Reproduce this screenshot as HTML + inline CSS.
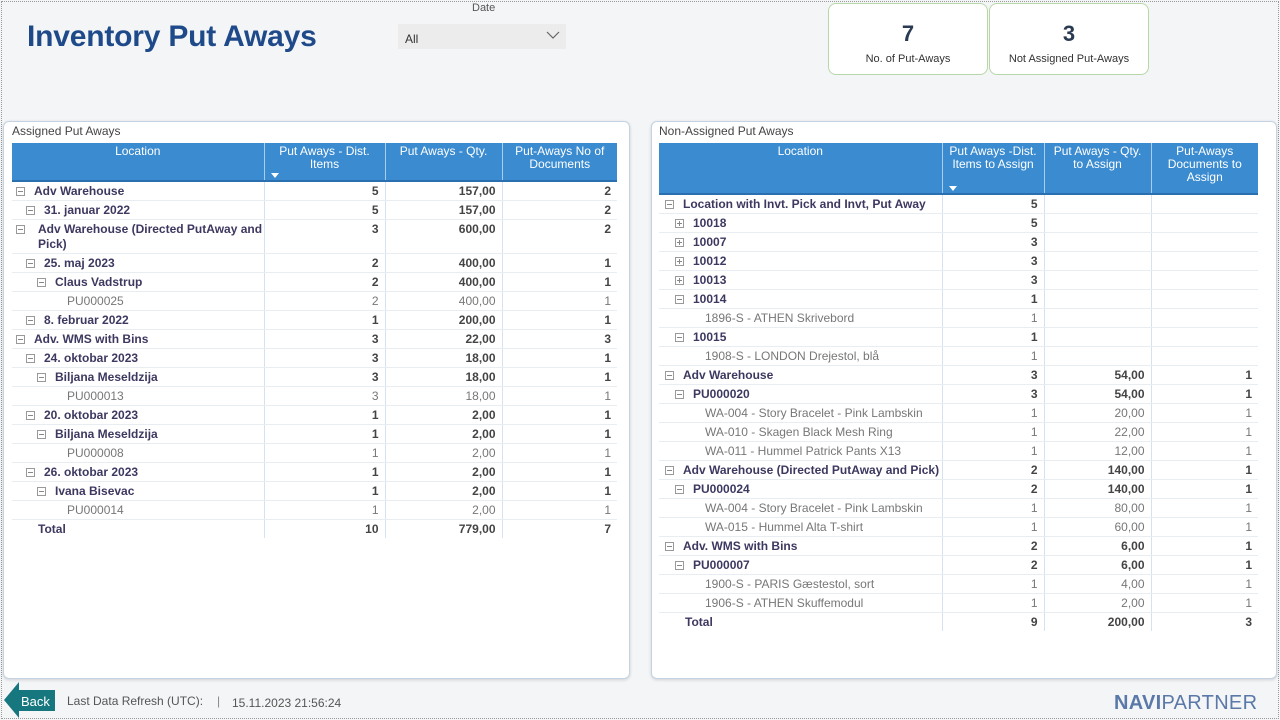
<!DOCTYPE html>
<html><head><meta charset="utf-8">
<style>
*{margin:0;padding:0;box-sizing:border-box}
body{width:1280px;height:720px;overflow:hidden;font-family:"Liberation Sans",sans-serif;background:#f4f5f7;position:relative}
.frame{position:absolute;left:1px;top:1px;width:1278px;height:718px;border:1px dotted #999}
.title{position:absolute;left:27px;top:20px;font-size:30px;font-weight:bold;color:#1f4a8a;letter-spacing:-0.2px}
.datel{position:absolute;left:472px;top:2px;font-size:11px;color:#555}
.dd{position:absolute;left:398px;top:24px;width:168px;height:25px;background:#ececec;font-size:12px;color:#333;padding:8px 0 0 7px}
.dd svg{position:absolute;right:6px;top:7px}
.card{position:absolute;top:3px;height:72px;width:160px;background:#fff;border:1px solid #b8d7a8;border-radius:8px;text-align:center}
.card b{display:block;font-size:22px;color:#2a3a52;margin-top:17px}
.card span{display:block;font-size:11px;color:#333;margin-top:6px}
.panel{position:absolute;top:121px;height:558px;background:#fff;border:1px solid #c4d3e3;border-radius:6px;box-shadow:0 1px 3px rgba(0,0,0,.15)}
.ptitle{position:absolute;top:3px;font-size:12px;color:#444}
table{position:absolute;border-collapse:collapse;table-layout:fixed;font-size:12px}
th{background:#3a8bd0;color:#fff;font-weight:normal;vertical-align:top;padding-top:2px;line-height:13px;border-left:1px solid #a9cdee;position:relative}
th:first-child{border-left:none}
th .ar{position:absolute;left:6px;bottom:2px;width:0;height:0;border-left:4px solid transparent;border-right:4px solid transparent;border-top:5px solid #fff}
thead tr{border-bottom:2px solid #2a6fb0}
td{height:19px;border-bottom:1px solid #e8edf2;text-align:right;padding-right:6px;vertical-align:top;padding-top:2px;color:#555;white-space:nowrap}
td+td{border-left:1px solid #d4e3f1}
td:first-child{text-align:left;padding-right:0;white-space:nowrap;overflow:hidden}
tr.b td{font-weight:bold;color:#3c3860}
tr.b td+td{color:#444}
tr.l td{color:#777}
.ic{display:inline-block;width:9px;height:9px;border:1px solid #999;position:relative;vertical-align:-1px;margin-right:9px}
.ic:before{content:"";position:absolute;left:1px;right:1px;top:3px;height:1px;background:#888}
.ic.p:after{content:"";position:absolute;top:1px;bottom:1px;left:3px;width:1px;background:#888}
.foot{position:absolute;top:694px;font-size:12px;color:#555}
</style></head><body>
<div class="frame"></div>
<div class="title">Inventory Put Aways</div>
<div class="datel">Date</div>
<div class="dd">All<svg width="14" height="9"><path d="M1 1 L7 7 L13 1" fill="none" stroke="#666" stroke-width="1.2"/></svg></div>
<div class="card" style="left:828px"><b>7</b><span>No. of Put-Aways</span></div>
<div class="card" style="left:989px"><b>3</b><span>Not Assigned Put-Aways</span></div>

<div class="panel" style="left:3px;width:627px"></div>
<div class="ptitle" style="left:12px;top:124px">Assigned Put Aways</div>
<table style="left:12px;top:143px;width:605px">
<colgroup><col style="width:252px"><col style="width:121px"><col style="width:117px"><col style="width:115px"></colgroup>
<thead><tr style="height:38px"><th>Location</th><th>Put Aways - Dist.<br>Items<span class="ar"></span></th><th>Put Aways - Qty.</th><th>Put-Aways No of<br>Documents</th></tr></thead>
<tbody>
<tr class="b"><td style="padding-left:4px"><span class="ic"></span>Adv Warehouse</td><td>5</td><td>157,00</td><td>2</td></tr>
<tr class="b"><td style="padding-left:14px"><span class="ic"></span>31. januar 2022</td><td>5</td><td>157,00</td><td>2</td></tr>
<tr class="b"><td style="padding-left:4px;white-space:normal;line-height:15px;height:34px;position:relative"><span class="ic" style="position:absolute;left:4px;top:5px"></span><div style="margin-left:22px">Adv Warehouse (Directed PutAway and Pick)</div></td><td>3</td><td>600,00</td><td>2</td></tr>
<tr class="b"><td style="padding-left:14px"><span class="ic"></span>25. maj 2023</td><td>2</td><td>400,00</td><td>1</td></tr>
<tr class="b"><td style="padding-left:25px"><span class="ic"></span>Claus Vadstrup</td><td>2</td><td>400,00</td><td>1</td></tr>
<tr class="l"><td style="padding-left:55px">PU000025</td><td>2</td><td>400,00</td><td>1</td></tr>
<tr class="b"><td style="padding-left:14px"><span class="ic"></span>8. februar 2022</td><td>1</td><td>200,00</td><td>1</td></tr>
<tr class="b"><td style="padding-left:4px"><span class="ic"></span>Adv. WMS with Bins</td><td>3</td><td>22,00</td><td>3</td></tr>
<tr class="b"><td style="padding-left:14px"><span class="ic"></span>24. oktobar 2023</td><td>3</td><td>18,00</td><td>1</td></tr>
<tr class="b"><td style="padding-left:25px"><span class="ic"></span>Biljana Meseldzija</td><td>3</td><td>18,00</td><td>1</td></tr>
<tr class="l"><td style="padding-left:55px">PU000013</td><td>3</td><td>18,00</td><td>1</td></tr>
<tr class="b"><td style="padding-left:14px"><span class="ic"></span>20. oktobar 2023</td><td>1</td><td>2,00</td><td>1</td></tr>
<tr class="b"><td style="padding-left:25px"><span class="ic"></span>Biljana Meseldzija</td><td>1</td><td>2,00</td><td>1</td></tr>
<tr class="l"><td style="padding-left:55px">PU000008</td><td>1</td><td>2,00</td><td>1</td></tr>
<tr class="b"><td style="padding-left:14px"><span class="ic"></span>26. oktobar 2023</td><td>1</td><td>2,00</td><td>1</td></tr>
<tr class="b"><td style="padding-left:25px"><span class="ic"></span>Ivana Bisevac</td><td>1</td><td>2,00</td><td>1</td></tr>
<tr class="l"><td style="padding-left:55px">PU000014</td><td>1</td><td>2,00</td><td>1</td></tr>
<tr class="b"><td style="padding-left:26px;border-bottom:none">Total</td><td style="border-bottom:none">10</td><td style="border-bottom:none">779,00</td><td style="border-bottom:none">7</td></tr>
</tbody></table>

<div class="panel" style="left:651px;width:626px"></div>
<div class="ptitle" style="left:659px;top:124px">Non-Assigned Put Aways</div>
<table style="left:659px;top:143px;width:599px">
<colgroup><col style="width:283px"><col style="width:102px"><col style="width:107px"><col style="width:107px"></colgroup>
<thead><tr style="height:51px"><th>Location</th><th>Put Aways -Dist.<br>Items to Assign<span class="ar"></span></th><th>Put Aways - Qty.<br>to Assign</th><th>Put-Aways<br>Documents to<br>Assign</th></tr></thead>
<tbody>
<tr class="b"><td style="padding-left:6px"><span class="ic"></span>Location with Invt. Pick and Invt, Put Away</td><td>5</td><td></td><td></td></tr>
<tr class="b"><td style="padding-left:16px"><span class="ic p"></span>10018</td><td>5</td><td></td><td></td></tr>
<tr class="b"><td style="padding-left:16px"><span class="ic p"></span>10007</td><td>3</td><td></td><td></td></tr>
<tr class="b"><td style="padding-left:16px"><span class="ic p"></span>10012</td><td>3</td><td></td><td></td></tr>
<tr class="b"><td style="padding-left:16px"><span class="ic p"></span>10013</td><td>3</td><td></td><td></td></tr>
<tr class="b"><td style="padding-left:16px"><span class="ic"></span>10014</td><td>1</td><td></td><td></td></tr>
<tr class="l"><td style="padding-left:46px">1896-S - ATHEN Skrivebord</td><td>1</td><td></td><td></td></tr>
<tr class="b"><td style="padding-left:16px"><span class="ic"></span>10015</td><td>1</td><td></td><td></td></tr>
<tr class="l"><td style="padding-left:46px">1908-S - LONDON Drejestol, blå</td><td>1</td><td></td><td></td></tr>
<tr class="b"><td style="padding-left:6px"><span class="ic"></span>Adv Warehouse</td><td>3</td><td>54,00</td><td>1</td></tr>
<tr class="b"><td style="padding-left:16px"><span class="ic"></span>PU000020</td><td>3</td><td>54,00</td><td>1</td></tr>
<tr class="l"><td style="padding-left:46px">WA-004 - Story Bracelet - Pink Lambskin</td><td>1</td><td>20,00</td><td>1</td></tr>
<tr class="l"><td style="padding-left:46px">WA-010 - Skagen Black Mesh Ring</td><td>1</td><td>22,00</td><td>1</td></tr>
<tr class="l"><td style="padding-left:46px">WA-011 - Hummel Patrick Pants X13</td><td>1</td><td>12,00</td><td>1</td></tr>
<tr class="b"><td style="padding-left:6px"><span class="ic"></span>Adv Warehouse (Directed PutAway and Pick)</td><td>2</td><td>140,00</td><td>1</td></tr>
<tr class="b"><td style="padding-left:16px"><span class="ic"></span>PU000024</td><td>2</td><td>140,00</td><td>1</td></tr>
<tr class="l"><td style="padding-left:46px">WA-004 - Story Bracelet - Pink Lambskin</td><td>1</td><td>80,00</td><td>1</td></tr>
<tr class="l"><td style="padding-left:46px">WA-015 - Hummel Alta T-shirt</td><td>1</td><td>60,00</td><td>1</td></tr>
<tr class="b"><td style="padding-left:6px"><span class="ic"></span>Adv. WMS with Bins</td><td>2</td><td>6,00</td><td>1</td></tr>
<tr class="b"><td style="padding-left:16px"><span class="ic"></span>PU000007</td><td>2</td><td>6,00</td><td>1</td></tr>
<tr class="l"><td style="padding-left:46px">1900-S - PARIS Gæstestol, sort</td><td>1</td><td>4,00</td><td>1</td></tr>
<tr class="l"><td style="padding-left:46px">1906-S - ATHEN Skuffemodul</td><td>1</td><td>2,00</td><td>1</td></tr>
<tr class="b"><td style="padding-left:26px;border-bottom:none">Total</td><td style="border-bottom:none">9</td><td style="border-bottom:none">200,00</td><td style="border-bottom:none">3</td></tr>
</tbody></table>

<svg style="position:absolute;left:3px;top:681px" width="54" height="38"><path d="M1 19 L16 1 L16 9 L52 9 L52 30 L16 30 L16 37 Z" fill="#17777e"/><text x="18" y="25" font-family="Liberation Sans" font-size="13" fill="#fff">Back</text></svg>
<div class="foot" style="left:67px">Last Data Refresh (UTC):</div>
<div class="foot" style="left:217px;color:#888">|</div>
<div class="foot" style="left:232px;top:696px">15.11.2023 21:56:24</div>
<div style="position:absolute;left:1114px;top:692px;font-size:20px;color:#5a78a8;letter-spacing:0.3px"><b style="font-weight:bold">NAVI</b>PARTNER</div>
</body></html>
